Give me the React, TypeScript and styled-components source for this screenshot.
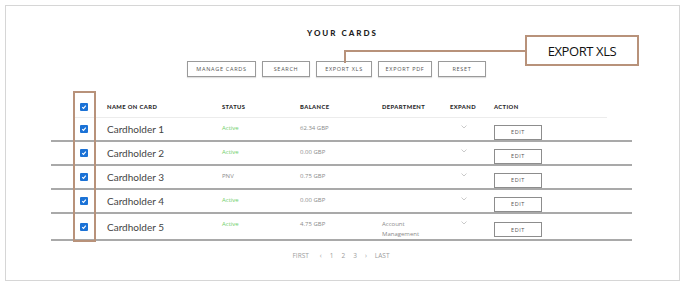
import React from "react";
import styled, { createGlobalStyle } from "styled-components";

const GlobalStyle = createGlobalStyle`
  html, body {
    margin: 0;
    padding: 0;
    background: #ffffff;
  }
  body {
    font-family: Lato, "Open Sans", sans-serif;
  }
`;

const accent = "#b8927a";

const Frame = styled.div`
  position: relative;
  box-sizing: border-box;
  margin: 5px 0 0 5px;
  width: 675px;
  height: 276px;
  border: 1px solid #d6d6d6;
  display: flex;
  flex-direction: column;
  align-items: flex-start;
`;

const Title = styled.h1`
  align-self: stretch;
  margin: 22px 0 0 0;
  text-align: center;
  font-family: Lato, sans-serif;
  font-weight: 900;
  font-size: 8px;
  line-height: 10px;
  letter-spacing: 2px;
  color: #1f1f1f;
`;

const Toolbar = styled.div`
  align-self: stretch;
  display: flex;
  justify-content: center;
  gap: 6px;
  margin-top: 23px;
  padding-right: 12px;
`;

const ToolButton = styled.button<{ $w: number }>`
  box-sizing: border-box;
  width: ${(p) => p.$w}px;
  height: 16px;
  padding: 0;
  border: 1.5px solid #9a9a9a;
  background: #ffffff;
  box-shadow: 0 1px 1px rgba(0, 0, 0, 0.12);
  font-family: "Open Sans", sans-serif;
  font-size: 5.5px;
  letter-spacing: 0.7px;
  color: #555;
`;

const Callout = styled.div`
  position: absolute;
  left: 519px;
  top: 29px;
  box-sizing: border-box;
  width: 114px;
  height: 31px;
  border: 2px solid ${accent};
  display: flex;
  align-items: center;
  justify-content: center;
  font-family: "Open Sans", sans-serif;
  font-size: 13px;
  letter-spacing: -0.4px;
  color: #111;
  background: #fff;
`;

const Leader = styled.div`
  position: absolute;
  left: 338px;
  top: 44px;
  width: 181px;
  height: 11px;
  border-top: 2px solid ${accent};
  border-left: 2px solid ${accent};
`;

const Table = styled.div`
  position: relative;
  margin: 18px 0 0 45px;
  width: 581px;
`;

const cols = "56px 115px 78px 82px 68px 44px 1fr";

const HeaderRow = styled.div`
  position: relative;
  display: grid;
  grid-template-columns: ${cols};
  align-items: center;
  height: 23px;
  &::after {
    content: "";
    position: absolute;
    left: 22px;
    right: 25px;
    bottom: 0;
    height: 1px;
    background: #ececec;
  }
`;

const HeadCell = styled.div`
  font-family: Lato, sans-serif;
  font-weight: 900;
  font-size: 5.8px;
  letter-spacing: 0.4px;
  color: #2a2a2a;
  text-transform: uppercase;
`;

const Row = styled.div`
  display: grid;
  grid-template-columns: ${cols};
  align-items: center;
  min-height: 24px;
  border-bottom: 2px solid #a9a9a9;
  box-sizing: border-box;
`;

const CheckCell = styled.div`
  padding-left: 29px;
  display: flex;
  align-items: center;
`;

const Check = styled.span`
  width: 8px;
  height: 8px;
  border-radius: 1px;
  background: #1b72d6;
  display: flex;
  align-items: center;
  justify-content: center;
`;

const Name = styled.div`
  font-family: Lato, sans-serif;
  font-size: 10px;
  color: #444;
`;

const Small = styled.div<{ $color?: string }>`
  align-self: start;
  padding-top: 5px;
  font-family: "Open Sans", sans-serif;
  font-size: 6px;
  line-height: 10px;
  color: ${(p) => p.$color ?? "#8a8a8a"};
`;

const Chevron = styled.div`
  align-self: start;
  padding: 7px 0 0 11px;
  display: flex;
`;

const EditButton = styled.button`
  box-sizing: border-box;
  width: 48px;
  height: 15px;
  padding: 0;
  border: 1.5px solid #8d8d8d;
  background: #fff;
  font-family: "Open Sans", sans-serif;
  font-size: 5.5px;
  letter-spacing: 0.6px;
  color: #555;
`;

const Highlight = styled.div`
  position: absolute;
  left: 22px;
  top: -4px;
  bottom: -1px;
  width: 23px;
  box-sizing: border-box;
  border: 2px solid ${accent};
  pointer-events: none;
`;

const Pager = styled.div`
  align-self: stretch;
  display: flex;
  justify-content: center;
  gap: 8px;
  margin-top: 10px;
  padding-right: 3px;
  font-family: "Open Sans", sans-serif;
  font-size: 6.5px;
  line-height: 10px;
  color: #9c9c9c;
`;

const PagerArrow = styled.span<{ $gap: number }>`
  margin-left: ${(p) => p.$gap}px;
`;

function Tick() {
  return (
    <svg width="6" height="6" viewBox="0 0 6 6">
      <path d="M1.2 3.2 L2.5 4.4 L4.8 1.6" fill="none" stroke="#fff" strokeWidth="1.1" />
    </svg>
  );
}

function Down() {
  return (
    <svg width="6" height="4" viewBox="0 0 6 4">
      <path d="M0.5 0.5 L3 3 L5.5 0.5" fill="none" stroke="#bdbdbd" strokeWidth="0.8" />
    </svg>
  );
}

const rows = [
  { name: "Cardholder 1", status: "Active", balance: "62.34 GBP", dept: [] as string[] },
  { name: "Cardholder 2", status: "Active", balance: "0.00 GBP", dept: [] },
  { name: "Cardholder 3", status: "PNV", balance: "0.75 GBP", dept: [] },
  { name: "Cardholder 4", status: "Active", balance: "0.00 GBP", dept: [] },
  { name: "Cardholder 5", status: "Active", balance: "4.75 GBP", dept: ["Account", "Management"] },
];

const tools = [
  { label: "MANAGE CARDS", w: 69 },
  { label: "SEARCH", w: 48 },
  { label: "EXPORT XLS", w: 56 },
  { label: "EXPORT PDF", w: 54 },
  { label: "RESET", w: 48 },
];

export default function App() {
  return (
    <>
      <GlobalStyle />
      <Frame>
        <Title>YOUR CARDS</Title>
        <Toolbar>
          {tools.map((t) => (
            <ToolButton key={t.label} $w={t.w}>
              {t.label}
            </ToolButton>
          ))}
        </Toolbar>
        <Leader />
        <Callout>EXPORT XLS</Callout>

        <Table>
          <HeaderRow>
            <CheckCell>
              <Check>
                <Tick />
              </Check>
            </CheckCell>
            <HeadCell>Name on card</HeadCell>
            <HeadCell>Status</HeadCell>
            <HeadCell>Balance</HeadCell>
            <HeadCell>Department</HeadCell>
            <HeadCell>Expand</HeadCell>
            <HeadCell>Action</HeadCell>
          </HeaderRow>
          {rows.map((r) => (
            <Row key={r.name}>
              <CheckCell>
                <Check>
                  <Tick />
                </Check>
              </CheckCell>
              <Name>{r.name}</Name>
              <Small $color={r.status === "Active" ? "#6fcf6a" : undefined}>{r.status}</Small>
              <Small>{r.balance}</Small>
              <Small>
                {r.dept.map((d) => (
                  <div key={d}>{d}</div>
                ))}
              </Small>
              <Chevron>
                <Down />
              </Chevron>
              <div>
                <EditButton>EDIT</EditButton>
              </div>
            </Row>
          ))}
          <Highlight />
        </Table>

        <Pager>
          <span>FIRST</span>
          <PagerArrow $gap={3}>‹</PagerArrow>
          <span>1</span>
          <span>2</span>
          <span>3</span>
          <span>›</span>
          <span>LAST</span>
        </Pager>
      </Frame>
    </>
  );
}
